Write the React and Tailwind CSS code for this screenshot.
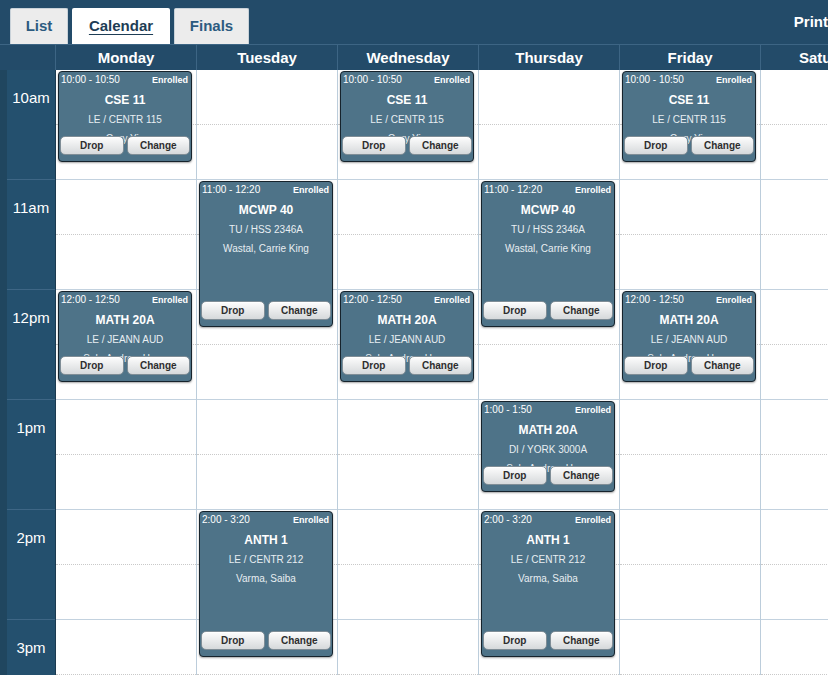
import React from 'react';

const HOUR_PX = 110;
const DAY_START = 600; // 10:00 in minutes

const days = ['Monday', 'Tuesday', 'Wednesday', 'Thursday', 'Friday', 'Saturday'];
const hours = ['10am', '11am', '12pm', '1pm', '2pm', '3pm'];

const cse11 = { start: 600, end: 650, time: '10:00 - 10:50', title: 'CSE 11', room: 'LE / CENTR 115', who: 'Gary Yiu' };
const math20a = { start: 720, end: 770, time: '12:00 - 12:50', title: 'MATH 20A', room: 'LE / JEANN AUD', who: 'Suh, Andrew Hoon' };
const mathDi = { start: 780, end: 830, time: '1:00 - 1:50', title: 'MATH 20A', room: 'DI / YORK 3000A', who: 'Suh, Andrew Hoon' };
const mcwp = { start: 660, end: 740, time: '11:00 - 12:20', title: 'MCWP 40', room: 'TU / HSS 2346A', who: 'Wastal, Carrie King' };
const anth = { start: 840, end: 920, time: '2:00 - 3:20', title: 'ANTH 1', room: 'LE / CENTR 212', who: 'Varma, Saiba' };

const schedule = {
  Monday: [cse11, math20a],
  Tuesday: [mcwp, anth],
  Wednesday: [cse11, math20a],
  Thursday: [mcwp, mathDi, anth],
  Friday: [cse11, math20a],
  Saturday: [],
};

const ClassCard = ({ c }) => {
  const top = ((c.start - DAY_START) / 60) * HOUR_PX + 1;
  const height = Math.round(((c.end - c.start) / 60) * HOUR_PX) - 1;
  return (
    <div
      className="absolute left-[2px] right-[4px] rounded-[4px] border border-[#16232c] bg-[#4e7388] text-white overflow-hidden shadow-[0_1px_2px_rgba(0,0,0,0.35)]"
      style={{ top, height }}
    >
      <div className="flex justify-between items-center h-[15px] pl-[2px] pr-[3px]">
        <span className="text-[10px] leading-[14px]">{c.time}</span>
        <span className="text-[9px] font-bold leading-[14px]">Enrolled</span>
      </div>
      <div className="text-center text-[12px] font-bold leading-[16px] mt-[5px]">{c.title}</div>
      <div className="text-center text-[10px] leading-[14px] mt-[5px] text-[#e8eef2]">{c.room}</div>
      <div className="text-center text-[10px] leading-[14px] mt-[5px] text-[#e8eef2]">{c.who}</div>
      <div className="absolute bottom-[6px] left-[1px] right-[1px] flex gap-[3px]">
        <button className="flex-1 h-[19px] rounded-[5px] border border-[#7f8d96] bg-linear-to-b from-[#fdfdfd] to-[#d6d9db] text-[10px] font-bold text-[#2e2e2e] shadow-[inset_0_1px_0_#fff]">
          Drop
        </button>
        <button className="flex-1 h-[19px] rounded-[5px] border border-[#7f8d96] bg-linear-to-b from-[#fdfdfd] to-[#d6d9db] text-[10px] font-bold text-[#2e2e2e] shadow-[inset_0_1px_0_#fff]">
          Change
        </button>
      </div>
    </div>
  );
};

const DayColumn = ({ day }) => (
  <div className="relative w-[141px] shrink-0 border-r border-[#bccddb] bg-white">
    {hours.map((h) => (
      <div key={h} className="h-[110px] border-b border-[#c3d2df] flex flex-col">
        <div className="h-[55px] border-b border-dotted border-[#c9c9c9]"></div>
      </div>
    ))}
    {schedule[day].map((c, i) => (
      <ClassCard key={i} c={c} />
    ))}
  </div>
);

const App = () => {
  return (
    <div className="w-[828px] h-[675px] overflow-hidden bg-[#234b69] font-['Liberation_Sans',Arial,sans-serif]">
      <div className="w-[903px]">
        {/* tab bar */}
        <div className="h-[44px] flex items-end pl-[10px]">
          <div className="flex gap-[4px] items-end">
            <div className="w-[58px] h-[36px] flex items-center justify-center bg-[#ececec] border border-b-0 border-[#c9d2d9] rounded-t-[2px] text-[15px] font-bold text-[#2c5b80]">
              List
            </div>
            <div className="w-[98px] h-[36px] flex items-center justify-center bg-white rounded-t-[2px] text-[15px] font-bold text-[#1e3d55] underline underline-offset-[3px]">
              Calendar
            </div>
            <div className="w-[75px] h-[36px] flex items-center justify-center bg-[#ececec] border border-b-0 border-[#c9d2d9] rounded-t-[2px] text-[15px] font-bold text-[#2c5b80]">
              Finals
            </div>
          </div>
          <div className="flex-1"></div>
          <div className="self-center mr-[75px] text-[15px] font-bold text-white">Print</div>
        </div>

        {/* day header */}
        <div className="h-[26px] flex border-t border-[#3d6584]">
          <div className="w-[56px] shrink-0 border-r border-[#3d6584]"></div>
          {days.map((d) => (
            <div key={d} className="w-[141px] shrink-0 border-r border-[#3d6584] text-center text-[15px] font-bold text-white leading-[25px]">
              {d}
            </div>
          ))}
        </div>

        {/* body */}
        <div className="flex">
          <div className="w-[56px] shrink-0 pl-[7px] bg-[#20465f]">
            <div className="bg-[#24506e] border-r border-[#1b3a50]">
              {hours.map((h) => (
                <div key={h} className="h-[110px] border-b border-[#3e6685] text-center text-white text-[15px] leading-[18px] pt-[19px]">
                  {h}
                </div>
              ))}
            </div>
          </div>
          {days.map((d) => (
            <DayColumn key={d} day={d} />
          ))}
        </div>
      </div>
    </div>
  );
};

export default App;
